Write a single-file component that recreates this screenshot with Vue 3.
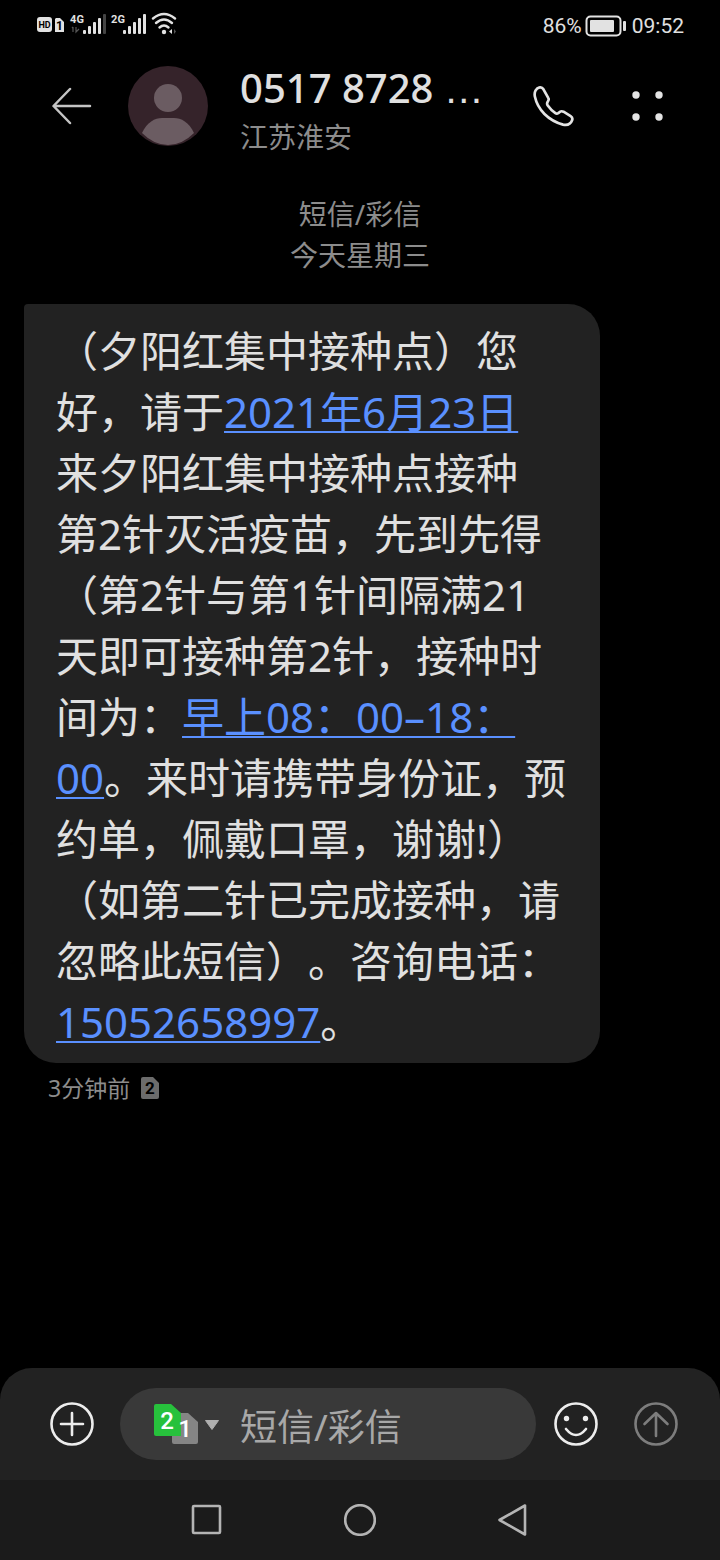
<script setup>
import { ref } from 'vue'

const draft = ref('')
const signalBars = [4, 8, 12, 16, 20]
</script>

<template>
  <div class="phone">
    <div class="status">
      <svg class="status-icons" width="144" height="28" viewBox="0 0 144 28" aria-hidden="true">
        <rect x="1" y="6" width="15" height="15" rx="3" fill="#e2e2e2" />
        <text x="8.500" y="17" class="hd">HD</text>
        <path d="M20 7h4l4 4v10h-9v-13z" fill="#e2e2e2" />
        <text x="23.500" y="18.500" class="slot">1</text>
        <text x="41" y="12" class="net">4G</text>
        <path d="M37 16v5M36 17l1-1M40 16v5l3-3" stroke="#555" stroke-width="1.2" fill="none" />
        <g v-for="(h, i) in signalBars" :key="'a' + i">
          <rect :x="47 + i * 5" :y="23 - h" width="3" :height="h" rx="1" :fill="i === 4 ? '#444' : '#e2e2e2'" />
        </g>
        <text x="82" y="12" class="net">2G</text>
        <g v-for="(h, i) in signalBars" :key="'b' + i">
          <rect :x="87 + i * 5" :y="23 - h" width="3" :height="h" rx="1" fill="#e2e2e2" />
        </g>
        <g fill="none" stroke="#e2e2e2" stroke-width="2.4" stroke-linecap="round">
          <path d="M117 7.500q11-9 22 0" />
          <path d="M120 12q8-7 16 0" />
          <path d="M123.500 16.500q4.500-4 9 0" />
        </g>
        <circle cx="128" cy="21" r="2.200" fill="#e2e2e2" />
        <path d="M136 18v5l-3-2.500z" fill="#e2e2e2" />
        <path d="M138 18v5l2-2.500z" fill="#555" />
      </svg>
      <div class="status-right">
        <span>86%</span>
        <svg width="42" height="22" viewBox="0 0 42 22" aria-hidden="true">
          <rect x="1.500" y="1.500" width="34" height="19" rx="4" fill="none" stroke="#e2e2e2" stroke-width="2" />
          <rect x="5" y="5" width="24" height="12" rx="1" fill="#e2e2e2" />
          <rect x="38" y="6" width="3" height="10" rx="1" fill="#e2e2e2" />
        </svg>
        <span class="clock">09:52</span>
      </div>
    </div>

    <header class="header">
      <button class="icon-button" aria-label="返回">
        <svg width="40" height="40" viewBox="0 0 40 40" fill="none" stroke="#c4c4c4" stroke-width="2.500" stroke-linecap="round" stroke-linejoin="round">
          <path d="M38 20H2M18 3L1.500 20L18 37" />
        </svg>
      </button>
      <svg class="avatar" width="80" height="80" viewBox="0 0 80 80" aria-hidden="true">
        <circle cx="40" cy="40" r="40" fill="#35232a" />
        <circle cx="40" cy="32" r="14" fill="#6b5c62" />
        <path d="M14 67C19 56 27 52 34 52H46C53 52 61 56 66 67Q54 79 40 79Q26 79 14 67Z" fill="#6b5c62" />
      </svg>
      <div class="contact">
        <h1 class="number">0517 8728 <span class="dots">…</span></h1>
        <p class="place">江苏淮安</p>
      </div>
      <button class="icon-button call" aria-label="拨打电话">
        <svg width="42" height="42" viewBox="0 0 44 44" fill="none" stroke="#e4e4e4" stroke-width="2.800" stroke-linejoin="round" stroke-linecap="round">
          <path d="M3 12C2 7 4.500 3 8 2.500Q10.500 2 12 4.500L17 13.500Q18 15 17 16.500L16 18.500Q15.500 20 16.500 21.500Q20 26.500 24.500 29.500Q26 30.500 27.500 29.500L29.500 28Q31 27 33 28L40.500 32.500Q43 34 42 37C40.500 41 37 42.500 32.500 41.500C17 37 6 26 3 12Z" />
        </svg>
      </button>
      <button class="icon-button" aria-label="更多">
        <svg width="32" height="32" viewBox="0 0 32 32" fill="#e4e4e4">
          <circle cx="4" cy="5" r="3.700" /><circle cx="27" cy="5" r="3.700" />
          <circle cx="4" cy="27" r="3.700" /><circle cx="27" cy="27" r="3.700" />
        </svg>
      </button>
    </header>

    <main class="thread">
      <div class="day">
        <p>短信/彩信</p>
        <p>今天星期三</p>
      </div>
      <article class="bubble">
        （夕阳红集中接种点）您<br />好，请于<a href="#date">2021年6月23日</a><br />来夕阳红集中接种点接种<br />第2针灭活疫苗，先到先得<br />（第2针与第1针间隔满21<br />天即可接种第2针，接种时<br />间为：<a href="#time">早上08：00–18：<br />00</a>。来时请携带身份证，预<br />约单，佩戴口罩，谢谢!）<br />（如第二针已完成接种，请<br />忽略此短信）。咨询电话：<br /><a href="#tel">15052658997</a>。
      </article>
      <div class="meta">
        <span>3分钟前</span>
        <svg width="18" height="22" viewBox="0 0 18 22" role="img" aria-label="卡2">
          <path d="M2 0H12L18 6V20Q18 22 16 22H2Q0 22 0 20V2Q0 0 2 0Z" fill="#6c6c6c" />
          <text x="9" y="17" class="sim-mark">2</text>
        </svg>
      </div>
    </main>

    <form class="composer" @submit.prevent>
      <button type="button" class="icon-button" aria-label="添加">
        <svg width="44" height="44" viewBox="0 0 44 44" fill="none" stroke="#ededed" stroke-width="2.600" stroke-linecap="round">
          <circle cx="22" cy="22" r="20.500" /><path d="M22 11V33M11 22H33" />
        </svg>
      </button>
      <div class="field">
        <button type="button" class="icon-button" aria-label="选择SIM卡">
          <svg width="66" height="40" viewBox="0 0 66 40">
            <path d="M20 9H34L44 18V38Q44 40 42 40H20Q18 40 18 38V11Q18 9 20 9Z" fill="#858585" />
            <path d="M2 0H17L27 9V32H2Q0 32 0 30V2Q0 0 2 0Z" fill="#27c13c" />
            <text x="13" y="25" class="sim-text">2</text>
            <text x="31" y="33" class="sim-text">1</text>
            <path d="M51.500 16.500H64.500L58 25.500Z" fill="#b0b0b0" stroke="#b0b0b0" stroke-linejoin="round" />
          </svg>
        </button>
        <input v-model="draft" class="input" type="text" placeholder="短信/彩信" aria-label="短信/彩信" />
      </div>
      <button type="button" class="icon-button" aria-label="表情">
        <svg width="44" height="44" viewBox="0 0 44 44" fill="none" stroke="#ededed" stroke-width="2.600" stroke-linecap="round">
          <circle cx="22" cy="22" r="20.500" />
          <circle cx="12.500" cy="16.500" r="2.700" fill="#ededed" stroke="none" />
          <circle cx="31.500" cy="16.500" r="2.700" fill="#ededed" stroke="none" />
          <path d="M12 27Q22 39 32 27" />
        </svg>
      </button>
      <button type="submit" class="icon-button send" aria-label="发送">
        <svg width="44" height="44" viewBox="0 0 44 44" fill="none" stroke="#7d7d7d" stroke-width="2.600" stroke-linecap="round" stroke-linejoin="round">
          <circle cx="22" cy="22" r="20.500" /><path d="M22 34V11M10.500 22L22 11L33.500 22" />
        </svg>
      </button>
    </form>

    <nav class="navbar">
      <button class="icon-button" aria-label="最近任务">
        <svg width="32" height="32" viewBox="0 0 32 32" fill="none" stroke="#b4b4b4" stroke-width="2.600">
          <rect x="2" y="2" width="27" height="27" rx="1" />
        </svg>
      </button>
      <button class="icon-button" aria-label="主屏幕">
        <svg width="32" height="32" viewBox="0 0 32 32" fill="none" stroke="#b4b4b4" stroke-width="2.600">
          <circle cx="16" cy="16" r="14.800" />
        </svg>
      </button>
      <button class="icon-button" aria-label="返回上一页">
        <svg width="32" height="32" viewBox="0 0 32 32" fill="none" stroke="#b4b4b4" stroke-width="2.600" stroke-linejoin="round">
          <path d="M28 1.500V30.500L2.500 16Z" />
        </svg>
      </button>
    </nav>
  </div>
</template>

<style>
body {
  background: #000;
}
</style>

<style scoped>
.phone {
  display: flex;
  flex-direction: column;
  min-height: 100vh;
  background: #000;
  color: #e0e0e0;
  font-family: "Noto Sans", "Noto Sans CJK SC", sans-serif;
}
svg {
  display: block;
}
h1,
p {
  margin: 0;
}
.icon-button {
  display: flex;
  flex: none;
  padding: 0;
  border: 0;
  background: none;
}
.status {
  display: flex;
  align-items: center;
  justify-content: space-between;
  height: 50px;
  padding: 0 36px;
}
.status text {
  font-family: "Roboto", sans-serif;
  font-weight: 700;
  text-anchor: middle;
}
.hd {
  font-size: 9px;
}
.slot {
  font-size: 12px;
}
.net {
  font-size: 11px;
  fill: #e2e2e2;
}
.status-right {
  display: flex;
  align-items: center;
  gap: 3px;
  padding-top: 2px;
  font-family: "Roboto", sans-serif;
  font-size: 21px;
  line-height: 28px;
}
.clock {
  padding-left: 2px;
}
.header {
  display: flex;
  align-items: center;
  height: 112px;
  padding: 0 56px 0 52px;
}
.avatar {
  flex: none;
  margin: 0 32px 0 36px;
}
.contact {
  flex: 1;
  min-width: 0;
  padding-top: 8px;
}
.number {
  font-size: 40px;
  font-weight: 500;
  line-height: 52px;
  white-space: nowrap;
}
.dots {
  font-family: "Liberation Sans", sans-serif;
}
.place {
  color: #8c8c8c;
  font-size: 28px;
  line-height: 44px;
}
.call {
  margin-right: 58px;
}
.thread {
  flex: 1;
  padding: 32px 24px;
}
.day {
  color: #8c8c8c;
  font-size: 28px;
  line-height: 41px;
  text-align: center;
}
.bubble {
  box-sizing: border-box;
  max-width: 576px;
  margin-top: 28px;
  padding: 16px 32px 11px;
  border-radius: 4px 32px 32px 32px;
  background: #222;
  font-size: 42px;
  line-height: 61px;
  text-spacing-trim: space-all;
}
.bubble a {
  color: #5a90ff;
  text-decoration: underline;
  text-decoration-thickness: 2px;
  text-underline-offset: 3px;
  text-decoration-skip-ink: none;
}
.meta {
  display: flex;
  align-items: center;
  gap: 11px;
  padding: 8px 24px;
  color: #8c8c8c;
  font-size: 23px;
  line-height: 34px;
}
.sim-mark {
  font-family: "Roboto", sans-serif;
  font-size: 17px;
  font-weight: 700;
  fill: #000;
  text-anchor: middle;
}
.composer {
  display: flex;
  align-items: center;
  padding: 20px 42px 20px 50px;
  border-radius: 32px 32px 0 0;
  background: #222;
}
.field {
  display: flex;
  align-items: center;
  flex: 1;
  min-width: 0;
  height: 72px;
  box-sizing: border-box;
  gap: 20px;
  margin: 0 18px 0 26px;
  padding: 0 34px;
  border-radius: 36px;
  background: #393939;
}
.sim-text {
  font-family: "Roboto", sans-serif;
  font-size: 24px;
  font-weight: 500;
  fill: #fff;
  text-anchor: middle;
}
.input {
  flex: 1;
  min-width: 0;
  height: 60px;
  padding: 4px 0 0;
  border: 0;
  outline: 0;
  background: none;
  color: #e0e0e0;
  font-family: inherit;
  font-size: 37px;
}
.input::placeholder {
  color: #a8a8a8;
  opacity: 1;
}
.send {
  margin-left: 36px;
}
.navbar {
  display: flex;
  height: 80px;
  padding: 0 130px;
  background: #1b1b1b;
}
.navbar .icon-button {
  flex: 1;
  align-items: center;
  justify-content: center;
}
</style>
